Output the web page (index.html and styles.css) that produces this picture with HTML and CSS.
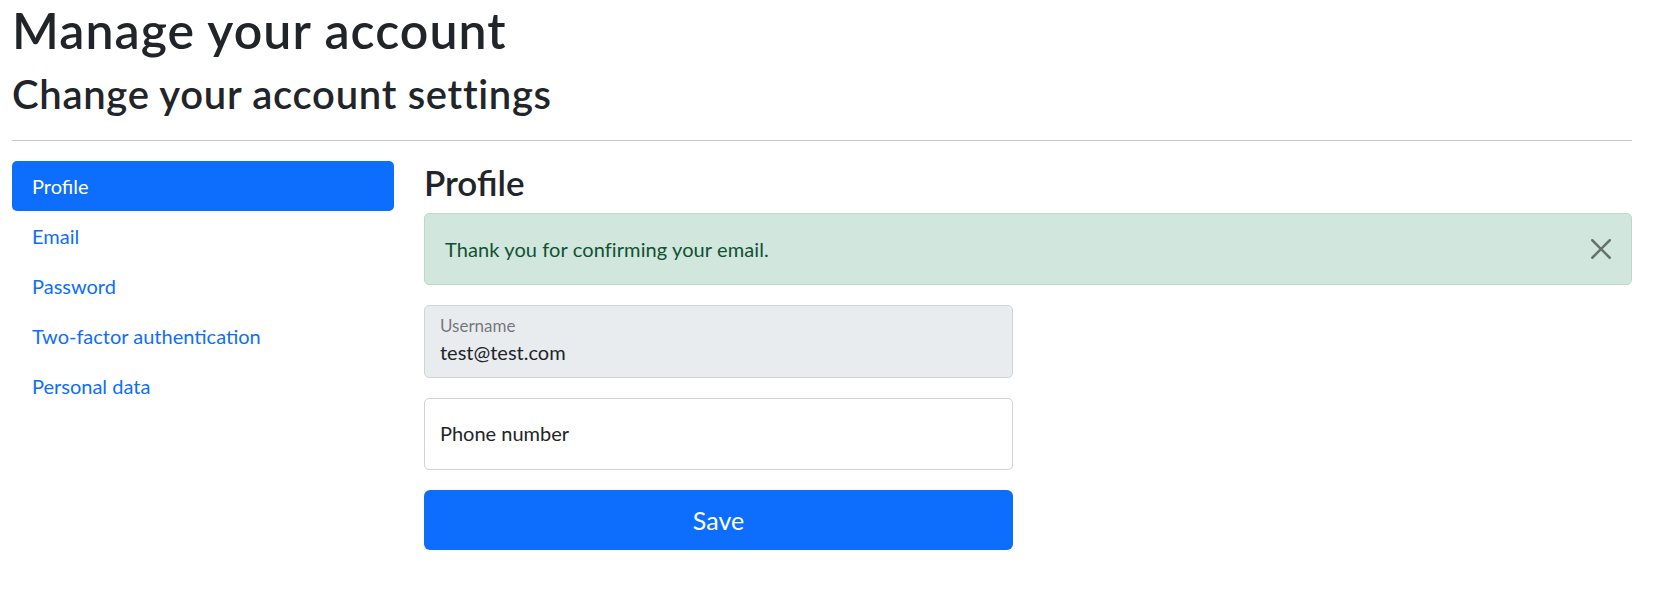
FILE: index.html
```html
<!DOCTYPE html>
<html lang="en">
<head>
<meta charset="utf-8">
<title>Manage your account</title>
<link rel="stylesheet" href="styles.css">
</head>
<body>
<main class="page">
  <h1 class="title">Manage your account</h1>
  <div class="manage">
    <h2 class="subtitle">Change your account settings</h2>
    <hr class="divider">
    <div class="layout">
      <nav class="side-nav">
        <a class="nav-link active" href="#">Profile</a>
        <a class="nav-link" href="#">Email</a>
        <a class="nav-link" href="#">Password</a>
        <a class="nav-link" href="#">Two-factor authentication</a>
        <a class="nav-link" href="#">Personal data</a>
      </nav>
      <section class="content">
        <h3 class="section-title">Profile</h3>
        <div class="alert">
          <span>Thank you for confirming your email.</span>
          <button class="alert-close" type="button" aria-label="Close">
            <svg viewBox="0 0 16 16" width="20" height="20"><path d="M.293.293a1 1 0 0 1 1.414 0L8 6.586 14.293.293a1 1 0 1 1 1.414 1.414L9.414 8l6.293 6.293a1 1 0 0 1-1.414 1.414L8 9.414l-6.293 6.293a1 1 0 0 1-1.414-1.414L6.586 8 .293 1.707a1 1 0 0 1 0-1.414z"/></svg>
          </button>
        </div>
        <form class="profile-form">
          <div class="field field-filled">
            <input class="field-input" type="text" value="test@test.com" disabled>
            <label class="field-label">Username</label>
          </div>
          <div class="field">
            <input class="field-input" type="text" value="">
            <label class="field-label">Phone number</label>
          </div>
          <button class="btn-save" type="button">Save</button>
        </form>
      </section>
    </div>
  </div>
</main>
</body>
</html>
```
FILE: styles.css
```css
* { box-sizing: border-box; }
html, body { margin: 0; padding: 0; background: #fff; }
body {
  font-family: "Lato", "Open Sans", "Noto Sans", sans-serif;
  font-size: 20px;
  line-height: 1.5;
  color: #212529;
}
.page { padding: 0 31px 0 12px; }
.title {
  margin: 0 0 10px;
  font-size: 50px;
  font-weight: 600;
  line-height: 60px;
  letter-spacing: 1.05px;
}
.subtitle {
  margin: 0;
  font-size: 40px;
  font-weight: 600;
  line-height: 48px;
  letter-spacing: 0.7px;
}
.divider {
  margin: 22px 0 20px;
  border: 0;
  border-top: 1px solid #c8c9ca;
  height: 0;
}
.layout {
  display: grid;
  grid-template-columns: 382px 1fr;
  column-gap: 30px;
}
.side-nav { display: flex; flex-direction: column; }
.nav-link {
  display: block;
  padding: 10px 20px;
  line-height: 30px;
  color: #0d6efd;
  text-decoration: none;
  border-radius: 5px;
}
.nav-link.active { background: #0d6efd; color: #fff; }
.section-title {
  margin: 0 0 10px;
  font-size: 35px;
  font-weight: 600;
  line-height: 42px;
}
.alert {
  position: relative;
  padding: 20px 60px 20px 20px;
  margin-bottom: 20px;
  background: #d1e7dd;
  border: 1px solid #badbcc;
  border-radius: 5px;
  color: #0f5132;
  line-height: 30px;
  letter-spacing: 0.1px;
}
.alert-close {
  position: absolute;
  top: 0;
  right: 0;
  padding: 25px 20px;
  border: 0;
  background: transparent;
  display: flex;
  opacity: .5;
}
.alert-close svg { fill: #000; display: block; }
.profile-form { width: 589px; display: flex; flex-direction: column; gap: 20px; }
.field { position: relative; }
.field-input {
  display: block;
  width: 100%;
  height: 72.5px;
  padding: 32px 15px 11px;
  font: inherit;
  font-size: 20px;
  line-height: 30px;
  color: #212529;
  background: #fff;
  border: 1px solid #ced4da;
  border-radius: 5px;
  outline: none;
}
.field-input:disabled { background: #e9ecef; color: #212529; -webkit-text-fill-color: #212529; opacity: 1; }
.field-label {
  position: absolute;
  top: 0;
  left: 0;
  padding: 20px 16px;
  line-height: 30px;
  color: #212529;
  pointer-events: none;
}
.field-filled .field-label {
  padding: 10px 16px;
  font-size: 17px;
  line-height: 22px;
  color: rgba(33, 37, 41, .6);
}
.btn-save {
  width: 100%;
  height: 60px;
  border: 0;
  border-radius: 6px;
  background: #0d6efd;
  color: #fff;
  font: inherit;
  font-size: 25px;
  line-height: 30px;
}
```
